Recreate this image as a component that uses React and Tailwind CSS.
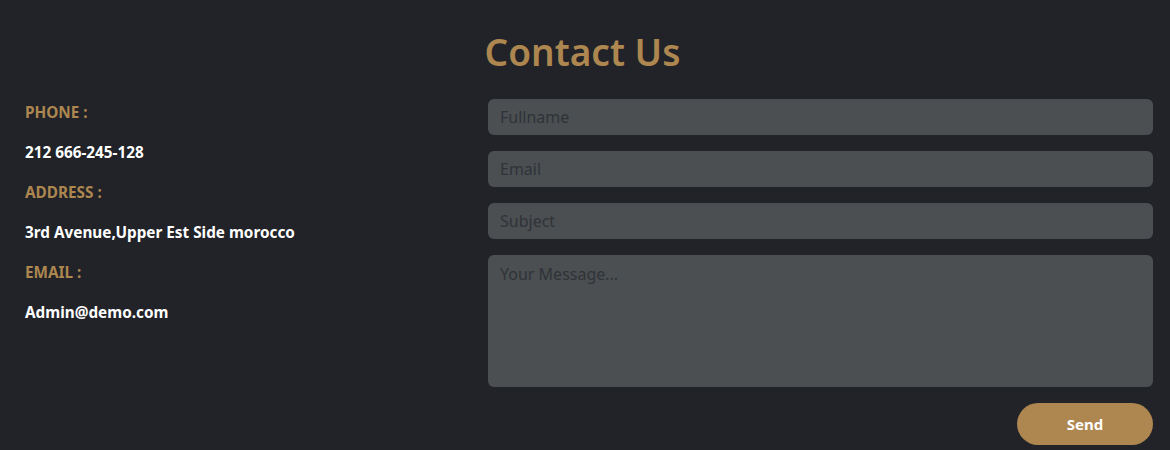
export default function App() {
  const font = { fontFamily: '"Noto Sans", "Open Sans", sans-serif' };
  return (
    <div className="min-h-[450px] w-full bg-[#212328] pl-[25px] pr-[17px] pt-[31px]" style={font}>
      <h1 className="pr-[13px] text-center text-[37px] font-semibold leading-[42px] text-[#ad8650]">Contact Us</h1>
      <div className="mt-[26px] flex">
        {/* info */}
        <div className="-mt-[7px] flex w-[463px] flex-col text-[15.3px] font-bold leading-5">
          <p className="py-[10px] text-[#ad8650]">PHONE :</p>
          <p className="py-[10px] text-white">212 666-245-128</p>
          <p className="py-[10px] text-[#ad8650]">ADDRESS :</p>
          <p className="py-[10px] text-white">3rd Avenue,Upper Est Side morocco</p>
          <p className="py-[10px] text-[#ad8650]">EMAIL :</p>
          <p className="py-[10px] text-white">Admin@demo.com</p>
        </div>
        {/* form */}
        <form className="flex flex-1 flex-col gap-4">
          <input
            className="h-9 rounded-md bg-[#4b4f52] px-3 text-[16px] text-white outline-none placeholder:text-[#303338]"
            placeholder="Fullname"
          />
          <input
            className="h-9 rounded-md bg-[#4b4f52] px-3 text-[16px] text-white outline-none placeholder:text-[#303338]"
            placeholder="Email"
          />
          <input
            className="h-9 rounded-md bg-[#4b4f52] px-3 text-[16px] text-white outline-none placeholder:text-[#303338]"
            placeholder="Subject"
          />
          <textarea
            className="h-[132px] resize-none rounded-md bg-[#4b4f52] px-3 py-[7px] text-[16px] text-white outline-none placeholder:text-[#303338]"
            placeholder="Your Message..."
          />
          <div className="flex justify-end">
            <button type="button" className="h-[42px] w-[136px] rounded-full bg-[#ad8650] text-[15px] font-bold text-white">
              Send
            </button>
          </div>
        </form>
      </div>
    </div>
  );
}
